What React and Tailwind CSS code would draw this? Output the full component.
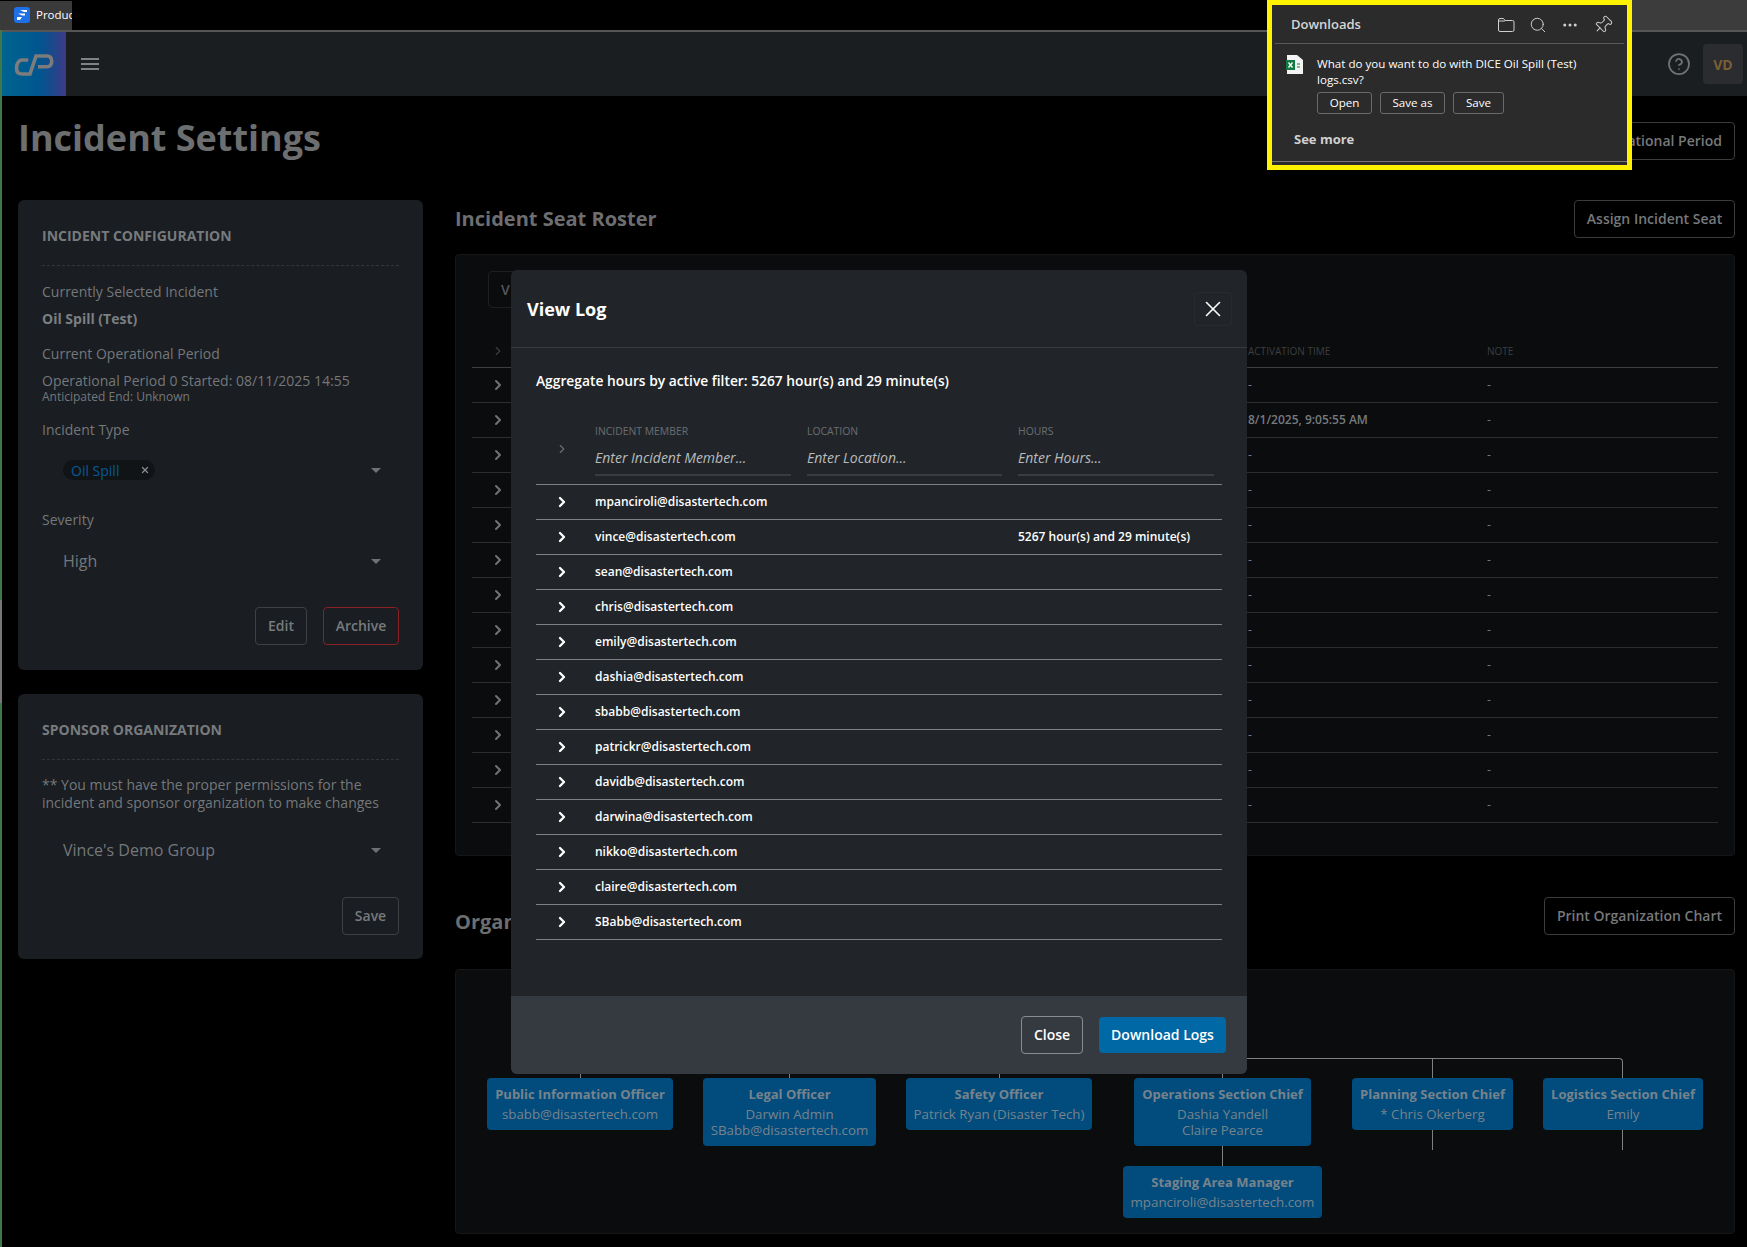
import React from 'react';
import { ChevronRight, Search, Pin, MoreHorizontal, X, CircleHelp } from 'lucide-react';

const Btn = ({ children, className = '' }) => (
  <div className={`flex items-center justify-center rounded-[4px] border pb-[2px] text-[14px] font-semibold ${className}`}>{children}</div>
);
const Caret = () => (
  <div className="h-0 w-0 border-x-[5px] border-t-[5px] border-x-transparent border-t-[#6f7275]" />
);
const Label = ({ children, className = '' }) => <div className={`text-[14px] leading-[16px] text-[#74787b] ${className}`}>{children}</div>;

const seatRows = Array.from({ length: 13 });
const logRows = [
  ['mpanciroli@disastertech.com', ''],
  ['vince@disastertech.com', '5267 hour(s) and 29 minute(s)'],
  ['sean@disastertech.com', ''],
  ['chris@disastertech.com', ''],
  ['emily@disastertech.com', ''],
  ['dashia@disastertech.com', ''],
  ['sbabb@disastertech.com', ''],
  ['patrickr@disastertech.com', ''],
  ['davidb@disastertech.com', ''],
  ['darwina@disastertech.com', ''],
  ['nikko@disastertech.com', ''],
  ['claire@disastertech.com', ''],
  ['SBabb@disastertech.com', ''],
];

const Node = ({ title, lines, className }) => (
  <div className={`absolute flex flex-col items-center rounded-[4px] bg-[#014c7d] pt-[6px] text-center ${className}`}>
    <div className="mb-[2px] text-[13px] leading-[20px] font-bold whitespace-nowrap text-[#77838c]">{title}</div>
    {lines.map((l) => (
      <div key={l} className="text-[13.3px] leading-[16px] whitespace-nowrap text-[#77838c]">{l}</div>
    ))}
  </div>
);

function LeftColumn() {
  return (
    <div className="flex w-[405px] shrink-0 flex-col gap-[24px]">
      <div className="h-[470px] rounded-[6px] bg-[#1a1d21] px-[24px] pt-[27px]">
        <div className="text-[14px] leading-[18px] font-bold text-[#777b7e]">INCIDENT CONFIGURATION</div>
        <div className="mt-[20px] border-t border-dashed border-[#34373a]" />
        <Label className="mt-[18px]">Currently Selected Incident</Label>
        <div className="mt-[11px] text-[14px] leading-[16px] font-bold text-[#7b7f82]">Oil Spill (Test)</div>
        <Label className="mt-[19px]">Current Operational Period</Label>
        <Label className="mt-[11px]">Operational Period 0 Started: 08/11/2025 14:55</Label>
        <div className="text-[12px] leading-[16px] text-[#74787b]">Anticipated End: Unknown</div>
        <Label className="mt-[17px]">Incident Type</Label>
        <div className="mt-[22px] flex h-[20px] items-center justify-between pl-[21px] pr-[18px]">
          <div className="flex h-[20px] w-[92px] items-center justify-between rounded-full bg-[#111417] pl-[8px] pr-[5px]">
            <span className="text-[14px] text-[#04599a]">Oil Spill</span>
            <X className="h-[10px] w-[10px] text-[#8a8d90]" strokeWidth={3} />
          </div>
          <Caret />
        </div>
        <Label className="mt-[32px]">Severity</Label>
        <div className="mt-[23px] flex h-[20px] items-center justify-between pl-[21px] pr-[18px]">
          <span className="text-[16px] text-[#74787b]">High</span>
          <Caret />
        </div>
        <div className="mt-[36px] flex justify-end gap-[16px]">
          <Btn className="h-[38px] w-[52px] border-[#3e4144] text-[#777b7e]">Edit</Btn>
          <Btn className="h-[38px] w-[76px] border-[#8a1f24] text-[#777b7e]">Archive</Btn>
        </div>
      </div>
      <div className="h-[265px] rounded-[6px] bg-[#1a1d21] px-[24px] pt-[27px]">
        <div className="text-[14px] leading-[18px] font-bold text-[#777b7e]">SPONSOR ORGANIZATION</div>
        <div className="mt-[20px] border-t border-dashed border-[#34373a]" />
        <div className="mt-[16px] text-[14px] leading-[18px] text-[#74787b]">
          ** You must have the proper permissions for the
          <br />
          incident and sponsor organization to make changes
        </div>
        <div className="mt-[27px] flex h-[22px] items-center justify-between pl-[21px] pr-[18px]">
          <span className="text-[16px] text-[#74787b]">Vince's Demo Group</span>
          <Caret />
        </div>
        <div className="mt-[36px] flex justify-end">
          <Btn className="h-[38px] w-[57px] border-[#3e4144] text-[#777b7e]">Save</Btn>
        </div>
      </div>
    </div>
  );
}

function SeatTable() {
  return (
    <div className="flex h-[602px] flex-col rounded-[4px] border border-[#141618] bg-[#0a0c0e] px-[16px] pt-[16px]">
      <div className="ml-[16px] h-[37px] w-[60px] rounded-[4px] border border-[#1d2022] pl-[12px] text-[14px] leading-[35px] font-semibold text-[#55585a]">V</div>
      <div className="mt-[36px] flex h-[24px] items-start border-b border-[#3c3e40] text-[10px]">
        <ChevronRight className="ml-[19px] h-[14px] w-[14px] text-[#3c3f41]" />
        <span className="ml-[743px] w-[239px] leading-[14px] text-[#3c3f41]">ACTIVATION TIME</span>
        <span className="leading-[14px] text-[#3c3f41]">NOTE</span>
      </div>
      {seatRows.map((_, i) => (
        <div key={i} className="flex h-[35px] items-center border-b border-[#2b2d2f] text-[12px]">
          <ChevronRight className="ml-[18px] h-[16px] w-[16px] text-[#6f7376]" strokeWidth={3} />
          <span className={`ml-[742px] w-[239px] text-[#777b7e] ${i === 1 ? 'font-semibold' : ''}`}>{i === 1 ? '8/1/2025, 9:05:55 AM' : '-'}</span>
          <span className="text-[#777b7e]">-</span>
        </div>
      ))}
    </div>
  );
}

function OrgChart() {
  return (
    <div className="relative h-[265px] rounded-[4px] border border-[#141618] bg-[#0a0c0e]">
      <div className="absolute left-[124px] top-[88px] h-[20px] w-[1043px] rounded-tr-[4px] border-r border-t border-[#7e8082]" />
      <div className="absolute left-[976px] top-[88px] h-[20px] w-px bg-[#7e8082]" />
      <div className="absolute left-[766px] top-[104px] h-[92px] w-px bg-[#7e8082]" />
      <div className="absolute left-[124px] top-[104px] h-[4px] w-px bg-[#7e8082]" />
      <div className="absolute left-[333px] top-[104px] h-[4px] w-px bg-[#7e8082]" />
      <div className="absolute left-[543px] top-[104px] h-[4px] w-px bg-[#7e8082]" />
      <div className="absolute left-[976px] top-[160px] h-[20px] w-px bg-[#7e8082]" />
      <div className="absolute left-[1166px] top-[160px] h-[20px] w-px bg-[#7e8082]" />
      <Node className="left-[31px] top-[108px] h-[52px] w-[186px]" title="Public Information Officer" lines={['sbabb@disastertech.com']} />
      <Node className="left-[247px] top-[108px] h-[68px] w-[173px]" title="Legal Officer" lines={['Darwin Admin', 'SBabb@disastertech.com']} />
      <Node className="left-[450px] top-[108px] h-[52px] w-[186px]" title="Safety Officer" lines={['Patrick Ryan (Disaster Tech)']} />
      <Node className="left-[678px] top-[108px] h-[68px] w-[177px]" title="Operations Section Chief" lines={['Dashia Yandell', 'Claire Pearce']} />
      <Node className="left-[896px] top-[108px] h-[52px] w-[161px]" title="Planning Section Chief" lines={['* Chris Okerberg']} />
      <Node className="left-[1087px] top-[108px] h-[52px] w-[160px]" title="Logistics Section Chief" lines={['Emily']} />
      <Node className="left-[667px] top-[196px] h-[52px] w-[199px]" title="Staging Area Manager" lines={['mpanciroli@disastertech.com']} />
    </div>
  );
}

function Modal() {
  return (
    <div className="absolute left-[511px] top-[270px] flex h-[804px] w-[736px] flex-col overflow-hidden rounded-[6px] bg-[#212529] text-white">
      <div className="flex h-[78px] shrink-0 items-center justify-between border-b border-[#373b3f] pl-[16px] pr-[15px]">
        <span className="pt-[2px] text-[18px] font-bold">View Log</span>
        <div className="flex h-[34px] w-[38px] items-center justify-center rounded-[4px] border border-[#282c30]">
          <X className="h-[26px] w-[26px]" strokeWidth={1.5} />
        </div>
      </div>
      <div className="flex-1 pl-[25px] pr-[25px]">
        <div className="mt-[24px] text-[13.8px] leading-[18px] font-semibold">Aggregate hours by active filter: 5267 hour(s) and 29 minute(s)</div>
        <div className="mt-[34px] flex h-[61px] border-b border-[#7f8184]">
          <div className="flex w-[59px] shrink-0 items-start justify-center pt-[18px] pr-[8px]">
            <ChevronRight className="h-[14px] w-[14px] text-[#6b6e71]" />
          </div>
          {[['INCIDENT MEMBER', 'Enter Incident Member...', 'w-[196px] mr-[16px]'], ['LOCATION', 'Enter Location...', 'w-[195px] mr-[16px]'], ['HOURS', 'Enter Hours...', 'w-[196px]']].map(([h, p, w]) => (
            <div key={h} className={`${w} h-[52px] shrink-0`}>
              <div className="text-[10.4px] leading-[14px] text-[#6b6e71]">{h}</div>
              <div className="mt-[4px] h-[34px] border-b-2 border-[#393d41] text-[14px] leading-[32px] italic text-[#b9bbbd]">{p}</div>
            </div>
          ))}
        </div>
        {logRows.map(([email, hours]) => (
          <div key={email} className="flex h-[35px] items-center border-b border-[#7f8184] text-[12px] font-semibold">
            <div className="flex w-[59px] justify-center pr-[8px]">
              <ChevronRight className="h-[16px] w-[16px]" strokeWidth={3.5} />
            </div>
            <span className="w-[423px]">{email}</span>
            <span>{hours}</span>
          </div>
        ))}
      </div>
      <div className="flex h-[78px] shrink-0 items-center justify-end gap-[16px] bg-[#343a40] pr-[21px]">
        <Btn className="h-[38px] w-[62px] border-[#8a8d90] text-white">Close</Btn>
        <div className="flex h-[36px] w-[127px] items-center justify-center rounded-[4px] bg-[#0068a5] pb-[2px] text-[14px] font-semibold">Download Logs</div>
      </div>
    </div>
  );
}

function Downloads() {
  return (
    <div className="absolute left-[1267px] top-0 h-[170px] w-[365px] border-[5px] border-[#fff200] bg-[#2b2b2b] text-white">
      <div className="mx-[3px] flex h-[39px] items-center justify-between border-b border-[#5a5a5a] pt-[2px] pl-[16px] pr-[11px]">
        <span className="text-[13px] font-semibold text-[#d6d6d6]">Downloads</span>
        <div className="flex items-center gap-[14px] text-[#cfcfcf]">
          <svg width="18" height="16" viewBox="0 0 18 16" fill="none" stroke="currentColor" strokeWidth="1">
            <path d="M1.5 13V3a1.5 1.5 0 0 1 1.5-1.5h3.5l1.5 2h7.5a1.5 1.5 0 0 1 1.5 1.5v8a1.5 1.5 0 0 1-1.5 1.5H3A1.5 1.5 0 0 1 1.5 13zM1.5 4h6.5" />
          </svg>
          <Search className="h-[18px] w-[18px]" strokeWidth={1.3} />
          <MoreHorizontal className="h-[18px] w-[18px]" strokeWidth={2} />
          <Pin className="h-[20px] w-[20px] rotate-45" strokeWidth={1.2} />
        </div>
      </div>
      <div className="ml-[14px] mt-[11px] flex">
        <svg width="18" height="20" viewBox="0 0 18 20" className="shrink-0">
          <path d="M1 0h10l6 5v14H1z" fill="#f4f4f4" />
          <rect x="0" y="5" width="9" height="10" fill="#107c41" />
          <path d="M2.5 7.5l4 5M6.5 7.5l-4 5" stroke="#fff" strokeWidth="1.3" />
          <path d="M11 9h3M11 12h3" stroke="#4caf6f" strokeWidth="1.5" />
        </svg>
        <div className="ml-[13px] pt-[1px]">
          <div className="w-[285px] text-[11.6px] leading-[16px]">What do you want to do with DICE Oil Spill (Test) logs.csv?</div>
          <div className="mt-[4px] flex gap-[8px] text-[11.6px]">
            <div className="flex h-[22px] w-[55px] items-center justify-center rounded-[3px] border border-[#6a6a6a]">Open</div>
            <div className="flex h-[22px] w-[65px] items-center justify-center rounded-[3px] border border-[#6a6a6a]">Save as</div>
            <div className="flex h-[22px] w-[51px] items-center justify-center rounded-[3px] border border-[#6a6a6a]">Save</div>
          </div>
        </div>
      </div>
      <div className="ml-[22px] mt-[16px] text-[13px] leading-[18px] font-bold text-[#d0d0d0]">See more</div>
      <div className="absolute inset-x-0 bottom-[3px] border-b border-[#7a7a7a]" />
    </div>
  );
}

export default function App() {
  return (
    <div className="relative h-[1247px] w-[1747px] overflow-hidden bg-black" style={{ fontFamily: '"Open Sans", sans-serif' }}>
      <div className="flex h-[30px] items-center justify-between bg-black">
        <div className="flex h-[29px] w-[72px] items-center overflow-hidden bg-[#3a3a3a] pl-[14px]">
          <div className="flex h-[16px] w-[16px] shrink-0 items-center justify-center rounded-[3px] bg-[#1f6fe5]">
            <svg width="12" height="12" viewBox="0 0 12 12"><path d="M4 1h7v2H8zM2 4.5h7v2H6zM1 8h5l-2 3H1z" fill="#fff" /></svg>
          </div>
          <span className="ml-[6px] whitespace-nowrap text-[11.5px] text-white">Product</span>
        </div>
        <div className="h-[30px] w-[116px] bg-[#3c3c3c]" />
      </div>
      <div className="flex h-[1217px]">
        <div className="w-[2px] shrink-0 bg-[linear-gradient(to_bottom,#3f7a46_570px,#777777_570px,#777777_673px,#3f7a46_673px)]" />
        <div className="min-w-0 flex-1">
          <div className="flex h-[66px] items-center border-t-2 border-[#555] bg-[#1b1e21]">
            <div className="h-[64px] w-[64px] bg-[linear-gradient(to_right,#00648f,#00558f_60%,#3d3a86)]">
              <svg width="64" height="64" viewBox="2 32 64 64" fill="none" stroke="#7c7c7c" strokeWidth="3.6">
                <path d="M28.3 60H22C18 60 16.5 65 16.5 68.5C16.5 72 18.5 74 22 74H30L36 56H47C50.5 56 51.7 58.5 51.7 61.5C51.7 64.5 50 66.7 47 66.7H38" />
              </svg>
            </div>
            <svg width="18" height="12" viewBox="0 0 18 12" className="ml-[15px]" fill="#808285">
              <rect width="18" height="2" />
              <rect y="5" width="18" height="2" />
              <rect y="10" width="18" height="2" />
            </svg>
            <div className="ml-auto mr-[4px] flex items-center gap-[12px]">
              <CircleHelp className="h-[24px] w-[24px] text-[#6f7376]" strokeWidth={1.75} />
              <div className="flex h-[40px] w-[40px] items-center justify-center rounded-[4px] bg-[#2a2c2f] text-[14px] font-bold text-[#7a5f35]">VD</div>
            </div>
          </div>
          <div className="flex h-[104px] items-start justify-between pr-[12px] pl-[16px]">
            <h1 className="mt-[20px] text-[36px] leading-[44px] font-bold text-[#6d6e70]">Incident Settings</h1>
            <Btn className="mt-[26px] h-[38px] border-[#3a3c3e] px-[12px] font-semibold text-[#77797b]">Start New Operational Period</Btn>
          </div>
          <div className="flex gap-[32px] pl-[16px] pr-[12px]">
            <LeftColumn />
            <div className="min-w-0 flex-1">
              <div className="flex h-[54px] items-start justify-between">
                <h2 className="mt-[5px] text-[20px] leading-[28px] font-bold text-[#6d6e70]">Incident Seat Roster</h2>
                <Btn className="h-[38px] w-[161px] border-[#3a3c3e] text-[#77797b]">Assign Incident Seat</Btn>
              </div>
              <SeatTable />
              <div className="mt-[41px] flex h-[72px] items-start justify-between">
                <h2 className="mt-[11px] text-[20px] leading-[28px] font-bold text-[#6d6e70]">Organization Chart</h2>
                <Btn className="h-[38px] w-[191px] border-[#3a3c3e] text-[#77797b]">Print Organization Chart</Btn>
              </div>
              <OrgChart />
            </div>
          </div>
        </div>
      </div>
      <Modal />
      <Downloads />
    </div>
  );
}
